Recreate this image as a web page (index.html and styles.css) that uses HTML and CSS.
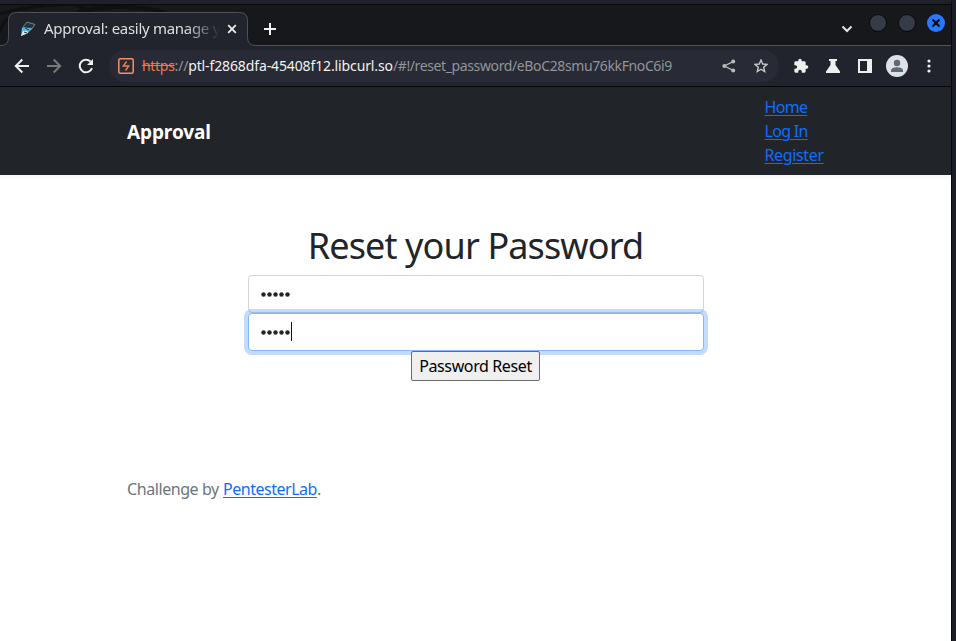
FILE: index.html
```html
<!DOCTYPE html>
<html lang="en">
<head>
<meta charset="utf-8">
<title>Approval: easily manage your approvals</title>
<link rel="stylesheet" href="styles.css">
</head>
<body>
<div class="window">
  <div class="tabstrip">
    <svg class="wallpaper" viewBox="0 0 260 41" fill="none" stroke="#0c0d10"><path d="M0 10Q45-4 130 2M0 28Q3 18 8 14" stroke-width="3"/><path d="M75 0L91 8M78 8Q120-2 165 8" stroke-width="4"/></svg>
    <svg class="tab-shape" viewBox="0 0 951 42" fill="none"><path d="M0 42H1Q8.500 41.500 8.500 33.500V16.500Q8.500 8.500 16.500 8.500H239.500Q247.500 8.500 247.500 16.500V33.500Q247.500 42 255 42" fill="#22242d"/><path d="M0 41.500H1Q8.500 41.500 8.500 33.500V16.500Q8.500 8.500 16.500 8.500H239.500Q247.500 8.500 247.500 16.500V33.500Q247.500 41.500 256 41.500H951" stroke="#505256"/></svg>
    <div class="tab">
      <svg class="favicon" width="18" height="18" viewBox="0 0 18 18"><path d="M8 2L16 4.500L12 10L4 7Z" fill="#25333e" stroke="#718591"/><path d="M3 7.500L13 8L9 13L2 16Z" fill="#58b9df"/><path d="M2 16L4 11L8 11L9 13Z" fill="#e5e8e8"/><path d="M6 8L10 10M5 12L8 13" stroke="#273840"/></svg>
      <span class="tab-title">Approval: easily manage y</span>
      <svg class="tab-close" width="10" height="10" viewBox="0 0 10 10"><path d="M1.200 1.200L8.800 8.800M8.800 1.200L1.200 8.800" stroke="#eee" stroke-width="1.800"/></svg>
    </div>
    <svg class="new-tab" width="12" height="12" viewBox="0 0 12 12"><path d="M6 0V12M0 6H12" stroke="#f2f2f0" stroke-width="2"/></svg>
    <div class="controls">
      <svg class="chevron" width="12" height="8" viewBox="0 0 12 8"><path d="M1.500 1.500L6 6L10.500 1.500" fill="none" stroke="#e5e5e3" stroke-width="2"/></svg>
      <i class="dot"></i><i class="dot"></i>
      <svg class="win-close" width="18" height="18" viewBox="0 0 18 18"><circle cx="9" cy="9" r="9" fill="#2777ff"/><path d="M5.500 5.500L12.500 12.500M12.500 5.500L5.500 12.500" stroke="#080b10" stroke-width="2.200"/></svg>
    </div>
  </div>
  <div class="toolbar">
    <div class="navigation">
      <svg width="16" height="16" viewBox="0 0 16 16"><path d="M15 8H2M8.300 1.500L1.800 8L8.300 14.500" fill="none" stroke="#efefed" stroke-width="2"/></svg>
      <svg width="16" height="16" viewBox="0 0 16 16"><path d="M1 8H14M7.700 1.500L14.200 8L7.700 14.500" fill="none" stroke="#77797b" stroke-width="2"/></svg>
      <svg width="16" height="16" viewBox="0 0 16 16"><path d="M14 10.200A6.300 6.300 0 1 1 12.600 3.600" fill="none" stroke="#efefed" stroke-width="2"/><path d="M15 1V7H9Z" fill="#efefed"/></svg>
    </div>
    <div class="address">
      <svg width="16" height="16" viewBox="0 0 16 16"><rect x=".8" y=".8" width="14.400" height="14.400" rx="1.500" fill="none" stroke="#fa9063" stroke-width="1.500"/><path d="M8.600 3.500L5.300 8H8.300M7.500 12.500L10.700 8H7.700" fill="none" stroke="#f07d52" stroke-width="1.400"/></svg>
      <span class="url"><span class="https">https</span><span class="scheme">://</span><b>ptl-f2868dfa-45408f12.libcurl.so</b><span class="path">/#!/reset_password/eBoC28smu76kkFnoC6i9</span></span>
      <svg class="share" width="14" height="14" viewBox="0 0 14 14"><path d="M11.500 2.400L2.500 7L11.500 11.600" fill="none" stroke="#bbb" stroke-width="1.300"/><g fill="#bbb"><circle cx="11.200" cy="2.500" r="2"/><circle cx="2.400" cy="7" r="2"/><circle cx="11.200" cy="11.500" r="2"/></g></svg>
      <svg width="14" height="14" viewBox="0 0 14 14"><path d="M7 1L8.700 5L13 5.400L9.700 8.200L10.700 12.500L7 10.200L3.300 12.500L4.300 8.200L1 5.400L5.300 5Z" fill="none" stroke="#c6c6c4" stroke-width="1.400"/></svg>
    </div>
    <div class="extensions">
      <svg width="16" height="16" viewBox="0 0 24 24"><path d="M20.500 11H19V7a2 2 0 0 0-2-2h-4V3.500a2.500 2.500 0 0 0-5 0V5H4a2 2 0 0 0-2 2v3.800h1.500a2.700 2.700 0 0 1 0 5.400H2V20a2 2 0 0 0 2 2h3.800v-1.500a2.700 2.700 0 0 1 5.400 0V22H17a2 2 0 0 0 2-2v-4h1.500a2.500 2.500 0 0 0 0-5Z" fill="#efefed"/></svg>
      <svg width="16" height="16" viewBox="0 0 16 16"><path d="M4 1H12V3H10.500V7L15 13.500V15H1V13.500L5.500 7V3H4Z" fill="#efefed"/></svg>
      <svg width="16" height="16" viewBox="0 0 16 16"><path d="M1 1H15V15H1ZM3 3V13H10V3Z" fill="#efefed" fill-rule="evenodd"/></svg>
      <svg class="avatar" width="22" height="22" viewBox="0 0 22 22"><circle cx="11" cy="11" r="11" fill="#dee1e6"/><circle cx="11" cy="8" r="3.200" fill="#5f6878"/><path d="M5 17V15.500C5 13 9 12.300 11 12.300S17 13 17 15.500V17Z" fill="#5f6878"/></svg>
      <svg class="menu" width="4" height="14" viewBox="0 0 4 14" fill="#efefed"><circle cx="2" cy="2" r="1.600"/><circle cx="2" cy="7" r="1.600"/><circle cx="2" cy="12" r="1.600"/></svg>
    </div>
  </div>
  <header class="site-header">
    <strong class="brand">Approval</strong>
    <nav><a class="home" href="#">Home</a><a class="login" href="#">Log In</a><a class="register" href="#">Register</a></nav>
  </header>
  <main>
    <h1>Reset your Password</h1>
    <form>
      <div class="field"><span class="bullets"><i></i><i></i><i></i><i></i><i></i></span></div>
      <div class="field focused"><span class="bullets"><i></i><i></i><i></i><i></i><i></i></span><span class="caret"></span></div>
      <button type="button"><span>Password Reset</span></button>
    </form>
    <footer><span class="credit">Challenge by</span> <a class="lab" href="#">PentesterLab</a>.</footer>
  </main>
</div>
</body>
</html>
```
FILE: styles.css
```css
* { box-sizing: border-box; }
body { margin: 0; width: 956px; height: 641px; overflow: hidden; background: #1c1d26; font: 16px/24px "Noto Sans", sans-serif; color: #212529; }
svg { display: block; flex: none; }
.window { width: 952px; height: 641px; border-top: 4px solid #1f202a; border-right: 1px solid #08090c; background: #fff; }
.tabstrip { position: relative; display: flex; height: 42px; background: #17181c; border-top: 1px solid #090a0c; }
.wallpaper, .tab-shape { position: absolute; left: 0; top: -1px; }
.wallpaper { width: 260px; height: 41px; opacity: .7; }
.tab-shape { width: 951px; height: 42px; }
.tab { position: relative; display: flex; align-items: center; width: 240px; margin-left: 8px; padding: 7px 11px 0; }
.favicon { margin-right: 7px; }
.tab-title { width: 176px; padding-bottom: 2px; overflow: hidden; white-space: nowrap; color: #dedfdf; font-size: 15px; letter-spacing: -.29px; -webkit-mask-image: linear-gradient(90deg, #000 80%, transparent); }
.tab-close { margin-left: 7px; }
.new-tab { position: relative; margin: 18px 0 0 16px; }
.controls { position: relative; display: flex; margin: 9px 6px 0 auto; }
.chevron { margin: 11px 16px 0 0; }
.dot { width: 18px; height: 18px; margin-right: 11px; border: 1px solid #08090b; border-radius: 50%; background: #353b47; }
.toolbar { display: flex; align-items: center; height: 41px; padding-left: 14px; border-bottom: 1px solid #050607; background: #22242d; }
.navigation { display: flex; gap: 16px; width: 95px; }
.address { display: flex; align-items: center; width: 670px; height: 32px; padding: 0 11px 0 9px; border-radius: 16px; background: #282a35; }
.url { width: 540px; margin-left: 8px; white-space: nowrap; font-size: 14px; color: #929599; }
.url b { font-weight: 400; color: #f1f2f2; letter-spacing: -.12px; }
.https { color: #ef774e; text-decoration: line-through; letter-spacing: -.3px; }
.scheme { letter-spacing: -.2px; }
.path { letter-spacing: -.38px; }
.share { margin: 0 18px 0 40px; }
.extensions { display: flex; align-items: center; gap: 16px; margin-left: 14px; }
.avatar { margin-left: -3px; }
.menu { margin-left: 3px; }
.site-header { display: flex; justify-content: space-between; align-items: center; height: 88px; padding: 0 127px; background: #212529; box-shadow: 0 2px 4px #0000000d; }
.brand { padding-top: 2px; color: #fff; font-size: 19px; line-height: 30px; letter-spacing: -.1px; }
nav { display: flex; flex-direction: column; align-items: flex-start; width: 59.5px; white-space: nowrap; }
a { color: #0d6efd; text-underline-offset: 2px; text-decoration-thickness: 1px; }
.home, .login { letter-spacing: -.7px; }
.register { letter-spacing: -.35px; }
main { padding: 47px 127px 0; }
h1 { margin: 0 0 6px; text-align: center; font-weight: 400; font-size: 36px; line-height: 47px; letter-spacing: -.87px; white-space: nowrap; }
form { display: flex; flex-direction: column; align-items: center; }
.field { display: flex; align-items: center; width: 456px; height: 38px; padding: 0 12px; border: 1px solid #ced4da; border-radius: 4px; background: #fff; }
.focused { border-color: #86b7fe; box-shadow: 0 0 0 4px #0d6efd40; }
.bullets { display: flex; gap: 1px; }
.bullets i { width: 5px; height: 5px; border-radius: 50%; background: #212529; transform: scale(.9); }
.caret { width: 1px; height: 19px; margin: 0 0 1px 1px; background: #111; }
button { width: 129px; height: 30px; padding: 0; border: 1px solid #6b6b6b; border-radius: 2px; background: #efefef; font: 16px/24px "Noto Sans", sans-serif; letter-spacing: -.38px; color: #000; }
footer { margin-top: 96px; color: #6c757d; white-space: nowrap; }
.credit { letter-spacing: -.42px; }
.lab { letter-spacing: -.48px; }
```
